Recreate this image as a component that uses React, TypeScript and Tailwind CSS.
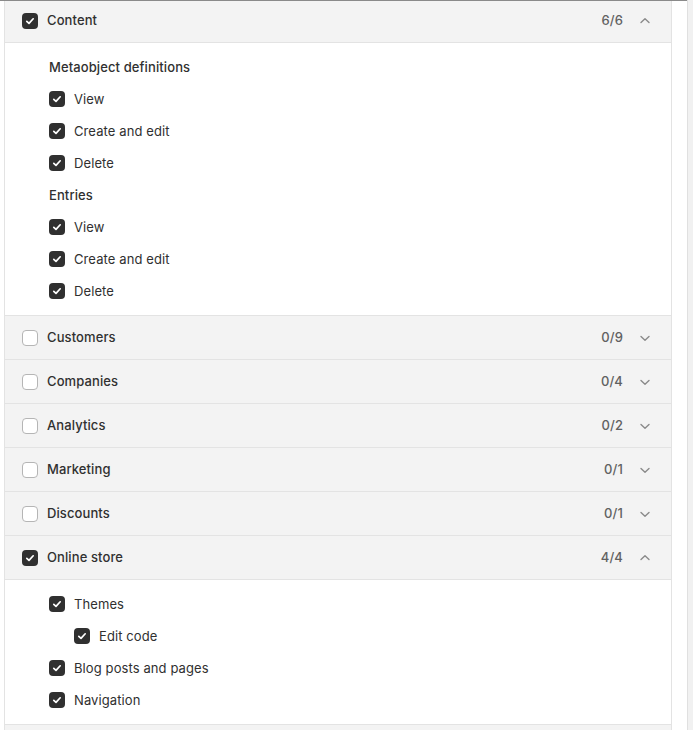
import React from 'react';

type Item = { label: string; indent?: boolean };
type Group = { heading?: string; items: Item[] };

interface Section {
  name: string;
  count: string;
  checked: boolean;
  open: boolean;
  groups?: Group[];
}

const sections: Section[] = [
  {
    name: 'Content',
    count: '6/6',
    checked: true,
    open: true,
    groups: [
      {
        heading: 'Metaobject definitions',
        items: [{ label: 'View' }, { label: 'Create and edit' }, { label: 'Delete' }],
      },
      {
        heading: 'Entries',
        items: [{ label: 'View' }, { label: 'Create and edit' }, { label: 'Delete' }],
      },
    ],
  },
  { name: 'Customers', count: '0/9', checked: false, open: false },
  { name: 'Companies', count: '0/4', checked: false, open: false },
  { name: 'Analytics', count: '0/2', checked: false, open: false },
  { name: 'Marketing', count: '0/1', checked: false, open: false },
  { name: 'Discounts', count: '0/1', checked: false, open: false },
  {
    name: 'Online store',
    count: '4/4',
    checked: true,
    open: true,
    groups: [
      {
        items: [
          { label: 'Themes' },
          { label: 'Edit code', indent: true },
          { label: 'Blog posts and pages' },
          { label: 'Navigation' },
        ],
      },
    ],
  },
];

function Checkbox({ checked }: { checked: boolean }) {
  if (!checked) {
    return <span className="w-4 h-4 rounded-[4px] border border-[#b5b5b5] bg-white flex-shrink-0" />;
  }
  return (
    <span className="w-4 h-4 rounded-[4px] bg-[#303030] flex items-center justify-center flex-shrink-0">
      <svg width="16" height="16" viewBox="0 0 16 16" fill="none">
        <path d="M4.8 8.3 7 10.4 11.2 5.8" stroke="white" strokeWidth="1.7" strokeLinecap="round" strokeLinejoin="round" />
      </svg>
    </span>
  );
}

function Chevron({ up }: { up: boolean }) {
  return (
    <span className="w-5 h-5 flex items-center justify-center">
      <svg width="20" height="20" viewBox="0 0 20 20" fill="none">
        <path
          d={up ? 'M6 11.5 10 7.75 14 11.5' : 'M6 8.5 10 12.25 14 8.5'}
          stroke="#8a8a8a"
          strokeWidth="1.4"
          strokeLinecap="round"
          strokeLinejoin="round"
        />
      </svg>
    </span>
  );
}

export default function App() {
  return (
    <div className="w-[693px] h-[730px] overflow-hidden bg-white flex text-[13px] text-[#303030] tracking-[0.1px]" style={{ fontFamily: 'Inter, "Noto Sans", sans-serif' }}>
      <div className="w-[687px] flex flex-col">
        <div className="h-px bg-[#8a8a8a] flex-shrink-0" />
        <div className="ml-[4px] w-[668px] border-x border-[#e3e3e3] flex flex-col">
          {sections.map((s, i) => (
            <div key={s.name} className="flex flex-col">
              <div
                className={`${i === 0 ? 'h-[42px] pb-[2px]' : 'h-[44px]'} bg-[#f3f3f3] border-b border-[#e3e3e3] flex items-center pl-[17px] pr-4`}
              >
                <Checkbox checked={s.checked} />
                <span className="ml-[9px] font-[450] flex-1">{s.name}</span>
                <span className="text-[#616161] font-[450] mr-3">{s.count}</span>
                <Chevron up={s.open} />
              </div>
              {s.open && s.groups && (
                <div className="bg-white border-b border-[#e3e3e3] pl-[44px] py-[14px] flex flex-col gap-3">
                  {s.groups.map((g, gi) => (
                    <React.Fragment key={gi}>
                      {g.heading && <div className="h-5 leading-5 font-[450]">{g.heading}</div>}
                      {g.items.map((it, ii) => (
                        <div key={ii} className={`h-5 flex items-center gap-[9px] ${it.indent ? 'ml-[25px]' : ''}`}>
                          <Checkbox checked />
                          <span className="leading-5">{it.label}</span>
                        </div>
                      ))}
                    </React.Fragment>
                  ))}
                </div>
              )}
            </div>
          ))}
          <div className="h-[20px] bg-[#f3f3f3]" />
        </div>
      </div>
      <div className="w-[6px] border-l border-[#e0e0e0] bg-[#f1f1f1]" />
    </div>
  );
}
